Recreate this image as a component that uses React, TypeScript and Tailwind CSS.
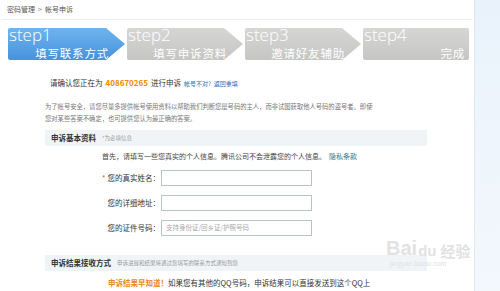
import React from 'react';

const font = { fontFamily: '"Noto Sans CJK SC", "Noto Sans", sans-serif' };

interface StepProps {
  label: string;
  title: string;
  active?: boolean;
  last?: boolean;
  width: string;
}

const Step: React.FC<StepProps> = ({ label, title, active, last, width }) => {
  const shape = last
    ? 'rounded-[2px]'
    : '[clip-path:polygon(0_0,calc(100%-19px)_0,100%_50%,calc(100%-19px)_100%,0_100%)]';
  const fill = active
    ? 'bg-gradient-to-b from-[#6fb4ef] to-[#4592dc]'
    : 'bg-gradient-to-b from-[#d6d6d4] to-[#c6c6c4]';
  return (
    <div className={`${width} h-[32px] relative rounded-l-[2px] ${shape} ${fill} text-white`}>
      <div className="absolute left-[1px] top-[-2px] text-[17px] font-thin leading-[17px]" style={{ fontFamily: '"Open Sans", Lato, sans-serif' }}>
        {label}
      </div>
      <div className={`absolute bottom-[1px] text-[11.5px] leading-[12px] tracking-[0.8px] ${last ? 'right-[4px]' : 'right-[16px]'}`}>
        {title}
      </div>
    </div>
  );
};

const FormRow: React.FC<{ label: string; required?: boolean; placeholder?: string }> = ({ label, required, placeholder }) => (
  <div className="flex items-center h-[16px] mb-[9px]">
    <div className="w-[161px] pr-[1px] text-right text-[7.5px] text-[#333]">
      {required && <span className="text-[#e05a00] mr-[2px]">*</span>}
      {label}
    </div>
    <div className="w-[151px] h-[16px] border border-[#b5c4c4] bg-white flex items-center px-[4px] text-[6.5px] text-[#aaa]">
      {placeholder}
    </div>
  </div>
);

export default function App() {
  return (
    <div className="w-[500px] h-[291px] flex overflow-hidden bg-white relative" style={font}>
      <div className="w-[475px] h-full bg-white border-r border-[#e3e8ee]">
        {/* breadcrumb */}
        <div className="h-[20px] mx-[2px] border-b border-[#ececec] flex items-center pl-[5px] text-[7px] text-[#555]">
          密码管理 <span className="mx-[3px] text-[#888]">&gt;</span> 帐号申诉
        </div>

        {/* steps */}
        <div className="flex gap-[2px] pl-[8px] mt-[8px]">
          <Step label="step1" title="填写联系方式" active width="w-[117px]" />
          <Step label="step2" title="填写申诉资料" width="w-[116px]" />
          <Step label="step3" title="邀请好友辅助" width="w-[116px]" />
          <Step label="step4" title="完成" last width="w-[106px]" />
        </div>

        {/* account confirm */}
        <div className="pl-[50px] mt-[17px] flex items-baseline text-[7.5px] text-[#333] leading-[12px]">
          请确认您正在为
          <span className="text-[#f08a00] font-bold mx-[3px] text-[8px]">408670265</span>
          进行申诉
          <span className="text-[#1e6fc0] text-[6px] ml-[3px]">帐号不对?</span>
          <span className="text-[#1e6fc0] text-[6px] ml-[3px]">返回重填</span>
        </div>

        {/* notice */}
        <div className="ml-[45px] w-[332px] mt-[11px] text-[6.3px] leading-[12px] text-[#777]">
          为了帐号安全，请您尽量多提供帐号使用资料以帮助我们判断您是号码的主人，而非试图获取他人号码的盗号者。即使您对某些答案不确定，也可提供您认为最正确的答案。
        </div>

        {/* section 1 */}
        <div className="ml-[45px] w-[382px] h-[16px] mt-[5px] bg-[#f1f4f7] flex items-center pl-[6px]">
          <span className="text-[7.5px] font-bold text-[#333]">申诉基本资料</span>
          <span className="text-[5.5px] text-[#999] ml-[6px]">*为必填信息</span>
        </div>
        <div className="pl-[102px] mt-[4px] text-[7px] text-[#444] leading-[12px]">
          首先，请填写一些您真实的个人信息。腾讯公司不会泄露您的个人信息。
          <span className="text-[#3a7a8a] ml-[3px]">隐私条款</span>
        </div>

        <div className="mt-[8px]">
          <FormRow label="您的真实姓名：" required />
          <FormRow label="您的详细地址：" />
          <FormRow label="您的证件号码：" placeholder="支持身份证/回乡证/护照号码" />
        </div>

        {/* section 2 */}
        <div className="ml-[45px] w-[382px] h-[16px] mt-[19px] bg-[#f1f4f7] flex items-center pl-[6px]">
          <span className="text-[7.5px] font-bold text-[#333]">申诉结果接收方式</span>
          <span className="text-[5.5px] text-[#999] ml-[6px]">申诉进展和结果将通过您填写的联系方式通知到您</span>
        </div>
        <div className="pl-[108px] mt-[6px] text-[7.5px] text-[#333] leading-[12px]">
          <span className="text-[#e58a1a] font-bold">申诉结果早知道！</span>
          如果您有其他的QQ号码，申诉结果可以直接发送到这个QQ上
        </div>
      </div>

      <div className="flex-1 h-full bg-gradient-to-b from-[#e9f2fb] to-[#f3f8fd]" />

      {/* watermark */}
      <div className="absolute left-[386px] top-[238px] text-[#e2e2e2] pointer-events-none leading-none">
        <div className="flex items-end">
          <span className="text-[20px] font-bold" style={{ fontFamily: '"Liberation Sans", sans-serif' }}>Bai</span>
          <span className="text-[15px] font-bold ml-[1px]" style={{ fontFamily: '"Liberation Sans", sans-serif' }}>du</span>
          <span className="text-[15px] font-bold ml-[4px]">经验</span>
        </div>
        <div className="text-[7px] mt-[2px] pl-[4px]" style={{ fontFamily: '"Liberation Sans", sans-serif' }}>jingyan.baidu.com</div>
      </div>
    </div>
  );
}
